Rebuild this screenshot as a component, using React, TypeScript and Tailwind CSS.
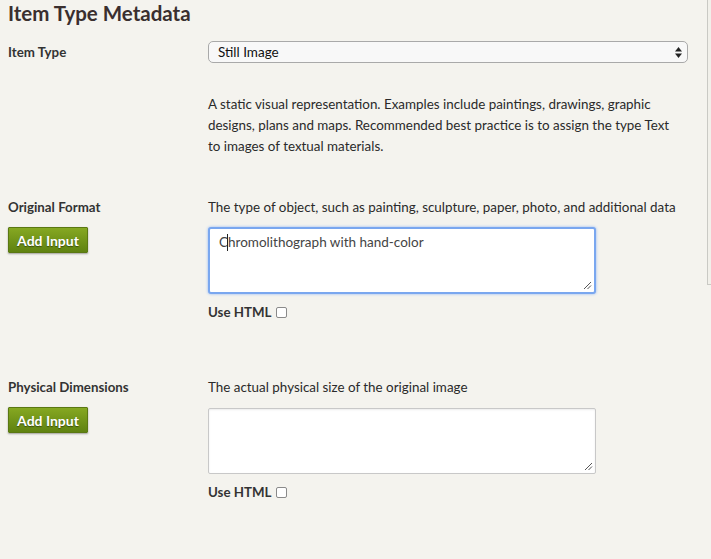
import React from "react";

const font = { fontFamily: "Lato, 'Open Sans', sans-serif" };

function UseHtml() {
  return (
    <div className="mt-[8px] flex items-center gap-[5px] text-[13.3px] font-bold leading-[20px] text-[#333]">
      <span>Use HTML</span>
      <span className="inline-block h-[11px] w-[11px] rounded-[2px] border border-[#8a8a8a] bg-white" />
    </div>
  );
}

function AddInput() {
  return (
    <button className="mt-[9px] h-[26px] w-[80px] rounded-[1px] border border-[#5a7812] bg-gradient-to-b from-[#86a822] to-[#5f8210] text-[14px] font-bold text-white shadow-[0_1px_2px_rgba(0,0,0,0.35)] [text-shadow:0_1px_1px_rgba(0,0,0,0.45)]">
      Add Input
    </button>
  );
}

export default function App() {
  return (
    <div className="relative h-[559px] w-[711px] overflow-hidden bg-[#f4f3ee] text-[#333]" style={font}>
      <div className="absolute right-0 top-0 h-[285px] w-[4px] border-b border-l border-[#c9c9c4] bg-[#f1f0ea]" />
      <div className="pl-[8px] pr-[23px]">
        <h2 className="pt-[0px] text-[20.5px] font-bold leading-[26px] text-[#3a2f2f]">Item Type Metadata</h2>

        <div className="mt-[15px] flex">
          <div className="w-[200px] pt-[1px] text-[13.3px] font-bold leading-[20px]">Item Type</div>
          <div className="flex-1">
            <div className="flex h-[22px] w-[480px] items-center justify-between rounded-[5px] border border-[#a9a9a9] bg-[#f8f8f8] pl-[9px] pr-[5px] text-[13.5px] text-[#111]">
              <span>Still Image</span>
              <svg width="7" height="11" viewBox="0 0 7 11">
                <path d="M3.5 0 L7 4.5 H0 Z" fill="#222" />
                <path d="M3.5 11 L7 6.5 H0 Z" fill="#222" />
              </svg>
            </div>
            <p className="mt-[31px] w-[470px] text-[13.4px] leading-[21px] text-[#2a2a2a]">
              A static visual representation. Examples include paintings, drawings, graphic designs, plans and maps. Recommended best practice is to assign the type Text to images of textual materials.
            </p>
          </div>
        </div>

        <div className="mt-[40px] flex">
          <div className="w-[200px]">
            <div className="text-[13.3px] font-bold leading-[21px]">Original Format</div>
            <AddInput />
          </div>
          <div className="flex-1">
            <div className="text-[13.4px] leading-[21px] text-[#2a2a2a]">
              The type of object, such as painting, sculpture, paper, photo, and additional data
            </div>
            <div className="relative mt-[9px] h-[67px] w-[388px] rounded-[3px] border-2 border-[#7aa7ef] bg-white shadow-[0_0_3px_#8fb6f5] pl-[9px] pt-[3px] text-[13.5px] text-[#444]">
              <span className="relative">
                <span>C</span>
                <span className="absolute left-[8px] top-[0px] h-[17px] w-px bg-[#222]" />
                hromolithograph with hand-color
              </span>
              <svg className="absolute bottom-[2px] right-[2px]" width="9" height="9" viewBox="0 0 9 9">
                <path d="M8 1 L1 8 M8 4.5 L4.5 8" stroke="#555" strokeWidth="1" />
              </svg>
            </div>
            <UseHtml />
          </div>
        </div>

        <div className="mt-[55px] flex">
          <div className="w-[200px]">
            <div className="text-[13.3px] font-bold leading-[21px]">Physical Dimensions</div>
            <AddInput />
          </div>
          <div className="flex-1">
            <div className="text-[13.4px] leading-[21px] text-[#2a2a2a]">
              The actual physical size of the original image
            </div>
            <div className="relative mt-[10px] h-[66px] w-[388px] rounded-[2px] border border-[#c8c8c8] bg-white shadow-[inset_0_1px_2px_rgba(0,0,0,0.08)]">
              <svg className="absolute bottom-[2px] right-[2px]" width="9" height="9" viewBox="0 0 9 9">
                <path d="M8 1 L1 8 M8 4.5 L4.5 8" stroke="#555" strokeWidth="1" />
              </svg>
            </div>
            <UseHtml />
          </div>
        </div>
      </div>
    </div>
  );
}
